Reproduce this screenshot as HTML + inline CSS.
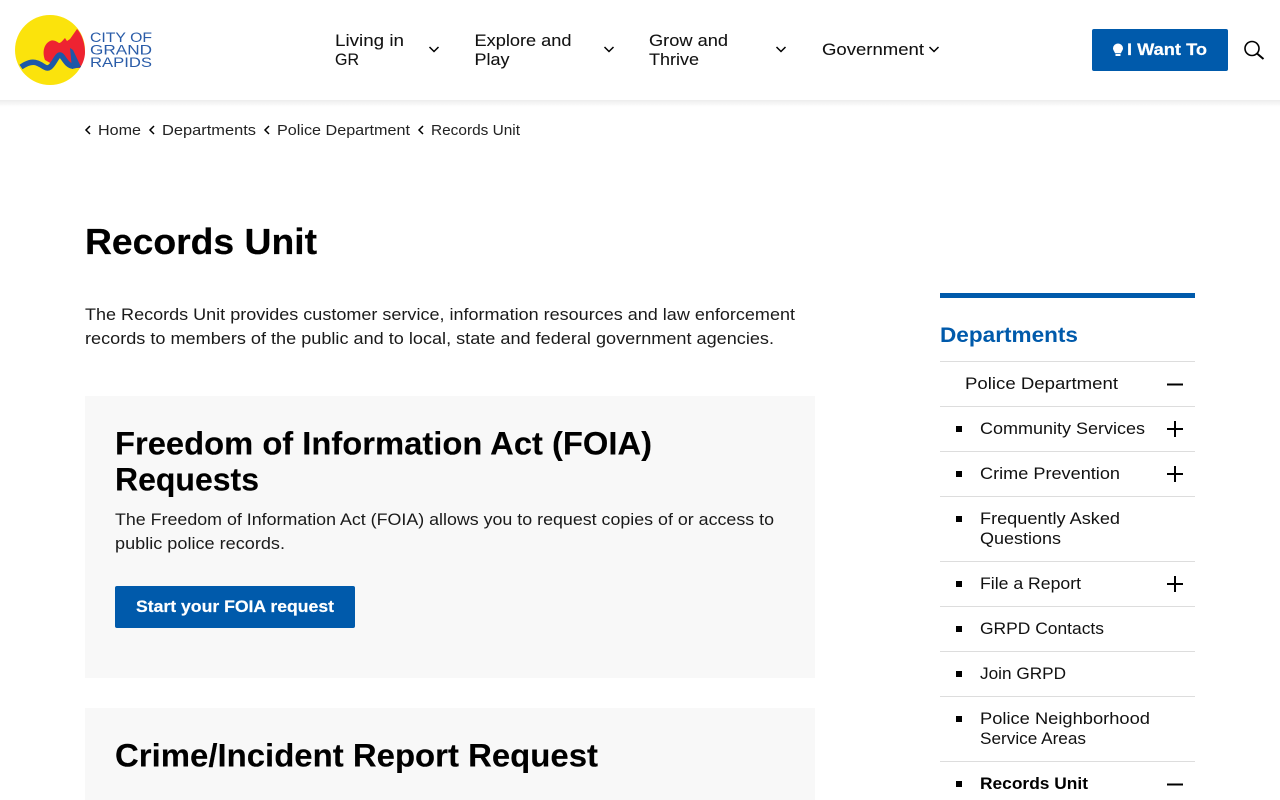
<!DOCTYPE html>
<html lang="en"><head><meta charset="utf-8"><title>Records Unit</title>
<style>
html,body{margin:0;padding:0;background:#fff;width:1280px;height:800px;overflow:hidden}
svg{display:block;position:absolute;left:0;top:0}
text{font-family:"Liberation Sans",sans-serif;fill:#1a1a1a;font-size:16.5px}
.h{fill:#000;stroke:#000;stroke-width:.2px;font-size:36px;font-weight:bold}
.h2{font-size:32px;stroke-width:.1px}
.n{fill:#111;stroke:#111;stroke-width:.08px;font-size:17px}
.b{font-size:14.5px;fill:#222}
.s{font-size:16.5px;fill:#111}
.w{fill:#fff;stroke:#fff;stroke-width:.2px;font-weight:bold;font-size:16.5px}
.c{fill:none;stroke:#000;stroke-width:1.5}
.l{stroke:#ddd;stroke-width:1}
.p{stroke:#000;stroke-width:2}
.logo{font-family:"Liberation Sans",sans-serif;font-size:13.5px;fill:#2a5ca8;stroke:none}
</style></head><body>
<svg width="1280" height="800" viewBox="0 0 1280 800" xmlns="http://www.w3.org/2000/svg">
<defs><linearGradient id="sh" x1="0" y1="0" x2="0" y2="1"><stop offset="0" stop-color="#000" stop-opacity=".07"/><stop offset="1" stop-color="#000" stop-opacity="0"/></linearGradient></defs>
<rect x="0" y="100" width="1280" height="7" fill="url(#sh)"/>

<circle cx="50" cy="50" r="35" fill="#fbe30c"/>
<path d="M45 60C42 52 44 44 50 41C53 39.500 56 41 59 43C61 43 63 40 65 38L67 41L70 39C72 36 75 32 77 29C81 33 85 42 85 52C85 58 83 63 80 68L70 68L60 55L52 64Z" fill="#ee2331"/>
<path d="M21 67C27 63 32 61 37 63C43 65 46 70 50 67C54 64 57 55 60 55C63 55 66 66 73 66" fill="none" stroke="#1d57a8" stroke-width="5.500"/>
<path d="M70 48L73 50L81 67L72 69Z" fill="#1d57a8"/>
<text class="logo" x="90" y="42" textLength="62" lengthAdjust="spacingAndGlyphs">CITY OF</text>
<text class="logo" x="90" y="54.500" textLength="62" lengthAdjust="spacingAndGlyphs">GRAND</text>
<text class="logo" x="90" y="67" textLength="62" lengthAdjust="spacingAndGlyphs">RAPIDS</text>

<text class="n" x="335" y="46" textLength="69" lengthAdjust="spacingAndGlyphs">Living in</text>
<text class="n" x="335" y="65" textLength="24" lengthAdjust="spacingAndGlyphs">GR</text>
<path class="c" d="M429.500 47l4.500 4.500l4.500-4.500"/>
<text class="n" x="474.500" y="46" textLength="97" lengthAdjust="spacingAndGlyphs">Explore and</text>
<text class="n" x="474.500" y="65" textLength="35" lengthAdjust="spacingAndGlyphs">Play</text>
<path class="c" d="M604.500 47l4.500 4.500l4.500-4.500"/>
<text class="n" x="649" y="46" textLength="79" lengthAdjust="spacingAndGlyphs">Grow and</text>
<text class="n" x="649" y="65" textLength="50" lengthAdjust="spacingAndGlyphs">Thrive</text>
<path class="c" d="M776.500 47l4.500 4.500l4.500-4.500"/>
<text class="n" x="822" y="55" textLength="102" lengthAdjust="spacingAndGlyphs">Government</text>
<path class="c" d="M929.500 47l4.500 4.500l4.500-4.500"/>

<rect x="1092" y="29" width="136" height="42" rx="2" fill="#005aab"/>
<path d="M1118 43.500a5 5 0 0 1 5 4.800c0 2-1.500 3-2 5h-6c-.5-2-2-3-2-5a5 5 0 0 1 5-4.800z" fill="#fff"/>
<rect x="1115.500" y="54" width="5" height="2" fill="#fff"/>
<text class="w" x="1127" y="55" textLength="80" lengthAdjust="spacingAndGlyphs">I Want To</text>
<circle cx="1252" cy="48.500" r="7" fill="none" stroke="#000" stroke-width="1.600"/>
<path d="M1257 53.500l6.500 5.500" stroke="#000" stroke-width="2" fill="none"/>

<path class="c" d="M90 126l-4 4l4 4"/>
<text class="b" x="98" y="135" textLength="43" lengthAdjust="spacingAndGlyphs">Home</text>
<path class="c" d="M154 126l-4 4l4 4"/>
<text class="b" x="162" y="135" textLength="94" lengthAdjust="spacingAndGlyphs">Departments</text>
<path class="c" d="M269 126l-4 4l4 4"/>
<text class="b" x="277" y="135" textLength="133" lengthAdjust="spacingAndGlyphs">Police Department</text>
<path class="c" d="M423 126l-4 4l4 4"/>
<text class="b" x="431" y="135" textLength="89" lengthAdjust="spacingAndGlyphs">Records Unit</text>

<text class="h" x="85" y="254" textLength="232" lengthAdjust="spacingAndGlyphs">Records Unit</text>
<text x="85" y="320" textLength="710" lengthAdjust="spacingAndGlyphs">The Records Unit provides customer service, information resources and law enforcement</text>
<text x="85" y="344" textLength="689" lengthAdjust="spacingAndGlyphs">records to members of the public and to local, state and federal government agencies.</text>

<rect x="85" y="396" width="730" height="282" fill="#f8f8f8"/>
<text class="h h2" x="115" y="454.500" textLength="537" lengthAdjust="spacingAndGlyphs">Freedom of Information Act (FOIA)</text>
<text class="h h2" x="115" y="490.500" textLength="144" lengthAdjust="spacingAndGlyphs">Requests</text>
<text x="115" y="525" textLength="659" lengthAdjust="spacingAndGlyphs">The Freedom of Information Act (FOIA) allows you to request copies of or access to</text>
<text x="115" y="549" textLength="170" lengthAdjust="spacingAndGlyphs">public police records.</text>
<rect x="115" y="586" width="240" height="42" rx="2" fill="#005aab"/>
<text class="w" x="136" y="612" textLength="198" lengthAdjust="spacingAndGlyphs">Start your FOIA request</text>
<rect x="85" y="708" width="730" height="92" fill="#f8f8f8"/>
<text class="h h2" x="115" y="766.500" textLength="483" lengthAdjust="spacingAndGlyphs">Crime/Incident Report Request</text>

<rect x="940" y="293" width="255" height="5" fill="#005aab"/>
<text x="940" y="342" textLength="138" lengthAdjust="spacingAndGlyphs" style="fill:#005aab;font-size:21.5px;font-weight:bold">Departments</text>
<path class="l" d="M940 361.500h255M940 406.500h255M940 451.500h255M940 496.500h255M940 561.500h255M940 606.500h255M940 651.500h255M940 696.500h255M940 761.500h255"/>
<text class="s" x="965" y="389" textLength="153" lengthAdjust="spacingAndGlyphs">Police Department</text>
<path class="p" d="M1167 384.500h16"/>
<rect x="956" y="426" width="6" height="6"/>
<text class="s" x="980" y="434" textLength="165" lengthAdjust="spacingAndGlyphs">Community Services</text>
<path class="p" d="M1167 429h16M1175 421v16"/>
<rect x="956" y="471" width="6" height="6"/>
<text class="s" x="980" y="479" textLength="140" lengthAdjust="spacingAndGlyphs">Crime Prevention</text>
<path class="p" d="M1167 474h16M1175 466v16"/>
<rect x="956" y="516" width="6" height="6"/>
<text class="s" x="980" y="524" textLength="140" lengthAdjust="spacingAndGlyphs">Frequently Asked</text>
<text class="s" x="980" y="544" textLength="81" lengthAdjust="spacingAndGlyphs">Questions</text>
<rect x="956" y="581" width="6" height="6"/>
<text class="s" x="980" y="589" textLength="101" lengthAdjust="spacingAndGlyphs">File a Report</text>
<path class="p" d="M1167 584h16M1175 576v16"/>
<rect x="956" y="626" width="6" height="6"/>
<text class="s" x="980" y="634" textLength="124" lengthAdjust="spacingAndGlyphs">GRPD Contacts</text>
<rect x="956" y="671" width="6" height="6"/>
<text class="s" x="980" y="679" textLength="86" lengthAdjust="spacingAndGlyphs">Join GRPD</text>
<rect x="956" y="716" width="6" height="6"/>
<text class="s" x="980" y="724" textLength="170" lengthAdjust="spacingAndGlyphs">Police Neighborhood</text>
<text class="s" x="980" y="744" textLength="106" lengthAdjust="spacingAndGlyphs">Service Areas</text>
<rect x="956" y="781" width="6" height="6"/>
<text class="s" x="980" y="789" textLength="108" lengthAdjust="spacingAndGlyphs" style="font-weight:bold;fill:#000">Records Unit</text>
<path class="p" d="M1167 784.500h16"/>
</svg>
</body></html>
